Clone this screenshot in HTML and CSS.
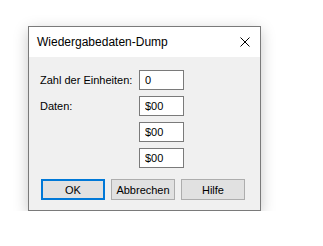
FILE: index.html
```html
<!DOCTYPE html>
<html lang="de">
  <head>
    <meta charset="UTF-8" />
    <title>Wiedergabedaten-Dump</title>
    <link rel="stylesheet" href="styles.css">
  </head>
  <body>
    <div class="dialog">
      <div class="titlebar">
        <span class="title">Wiedergabedaten-Dump</span>
        <svg class="close" width="10" height="10" viewBox="0 0 10 10">
          <path d="M0.5 0.5 L9.5 9.5 M9.5 0.5 L0.5 9.5" stroke="#000" stroke-width="1" fill="none" />
        </svg>
      </div>
      <div class="content">
        <div class="form">
          <label for="count">Zahl der Einheiten:</label>
          <input type="text" id="count" value="0" />
          <label for="data1">Daten:</label>
          <input type="text" id="data1" value="$00" />
          <span></span>
          <input type="text" id="data2" value="$00" />
          <span></span>
          <input type="text" id="data3" value="$00" />
        </div>
        <div class="buttons">
          <button class="default">OK</button>
          <button>Abbrechen</button>
          <button>Hilfe</button>
        </div>
      </div>
    </div>
  </body>
</html>
```

FILE: styles.css
```css
body {
  margin: 0;
  background-color: #ffffff;
  font-family: "Liberation Sans", Arial, sans-serif;
  font-size: 11px;
  color: #000000;
}
.dialog {
  margin: 26px 0 0 28px;
  width: 231px;
  height: 183px;
  border: 1px solid #7a7a7a;
  background-color: #f0f0f0;
  box-shadow: 0 4px 14px rgba(0, 0, 0, 0.22);
  display: flex;
  flex-direction: column;
}
.titlebar {
  height: 30px;
  background-color: #ffffff;
  display: flex;
  align-items: center;
  justify-content: space-between;
  padding: 0 10px 0 8px;
}
.title {
  font-size: 12px;
}
.content {
  padding: 13px 0 0 11px;
}
.form {
  display: grid;
  grid-template-columns: 99px 45px;
  grid-auto-rows: 20px;
  row-gap: 6px;
  align-items: center;
}
.form label {
  line-height: 20px;
  white-space: nowrap;
}
.form input {
  box-sizing: border-box;
  width: 45px;
  height: 20px;
  border: 1px solid #7a7a7a;
  background-color: #ffffff;
  padding: 0 5px;
  font-family: inherit;
  font-size: 11px;
  color: #000000;
  outline: none;
}
.buttons {
  display: flex;
  gap: 6px;
  margin-top: 11px;
  padding-left: 1px;
}
.buttons button {
  box-sizing: border-box;
  width: 64px;
  height: 21px;
  border: 1px solid #adadad;
  background-color: #e1e1e1;
  font-family: inherit;
  font-size: 11px;
  color: #000000;
  padding: 0;
}
.buttons button.default {
  border: 2px solid #0078d7;
}
```
